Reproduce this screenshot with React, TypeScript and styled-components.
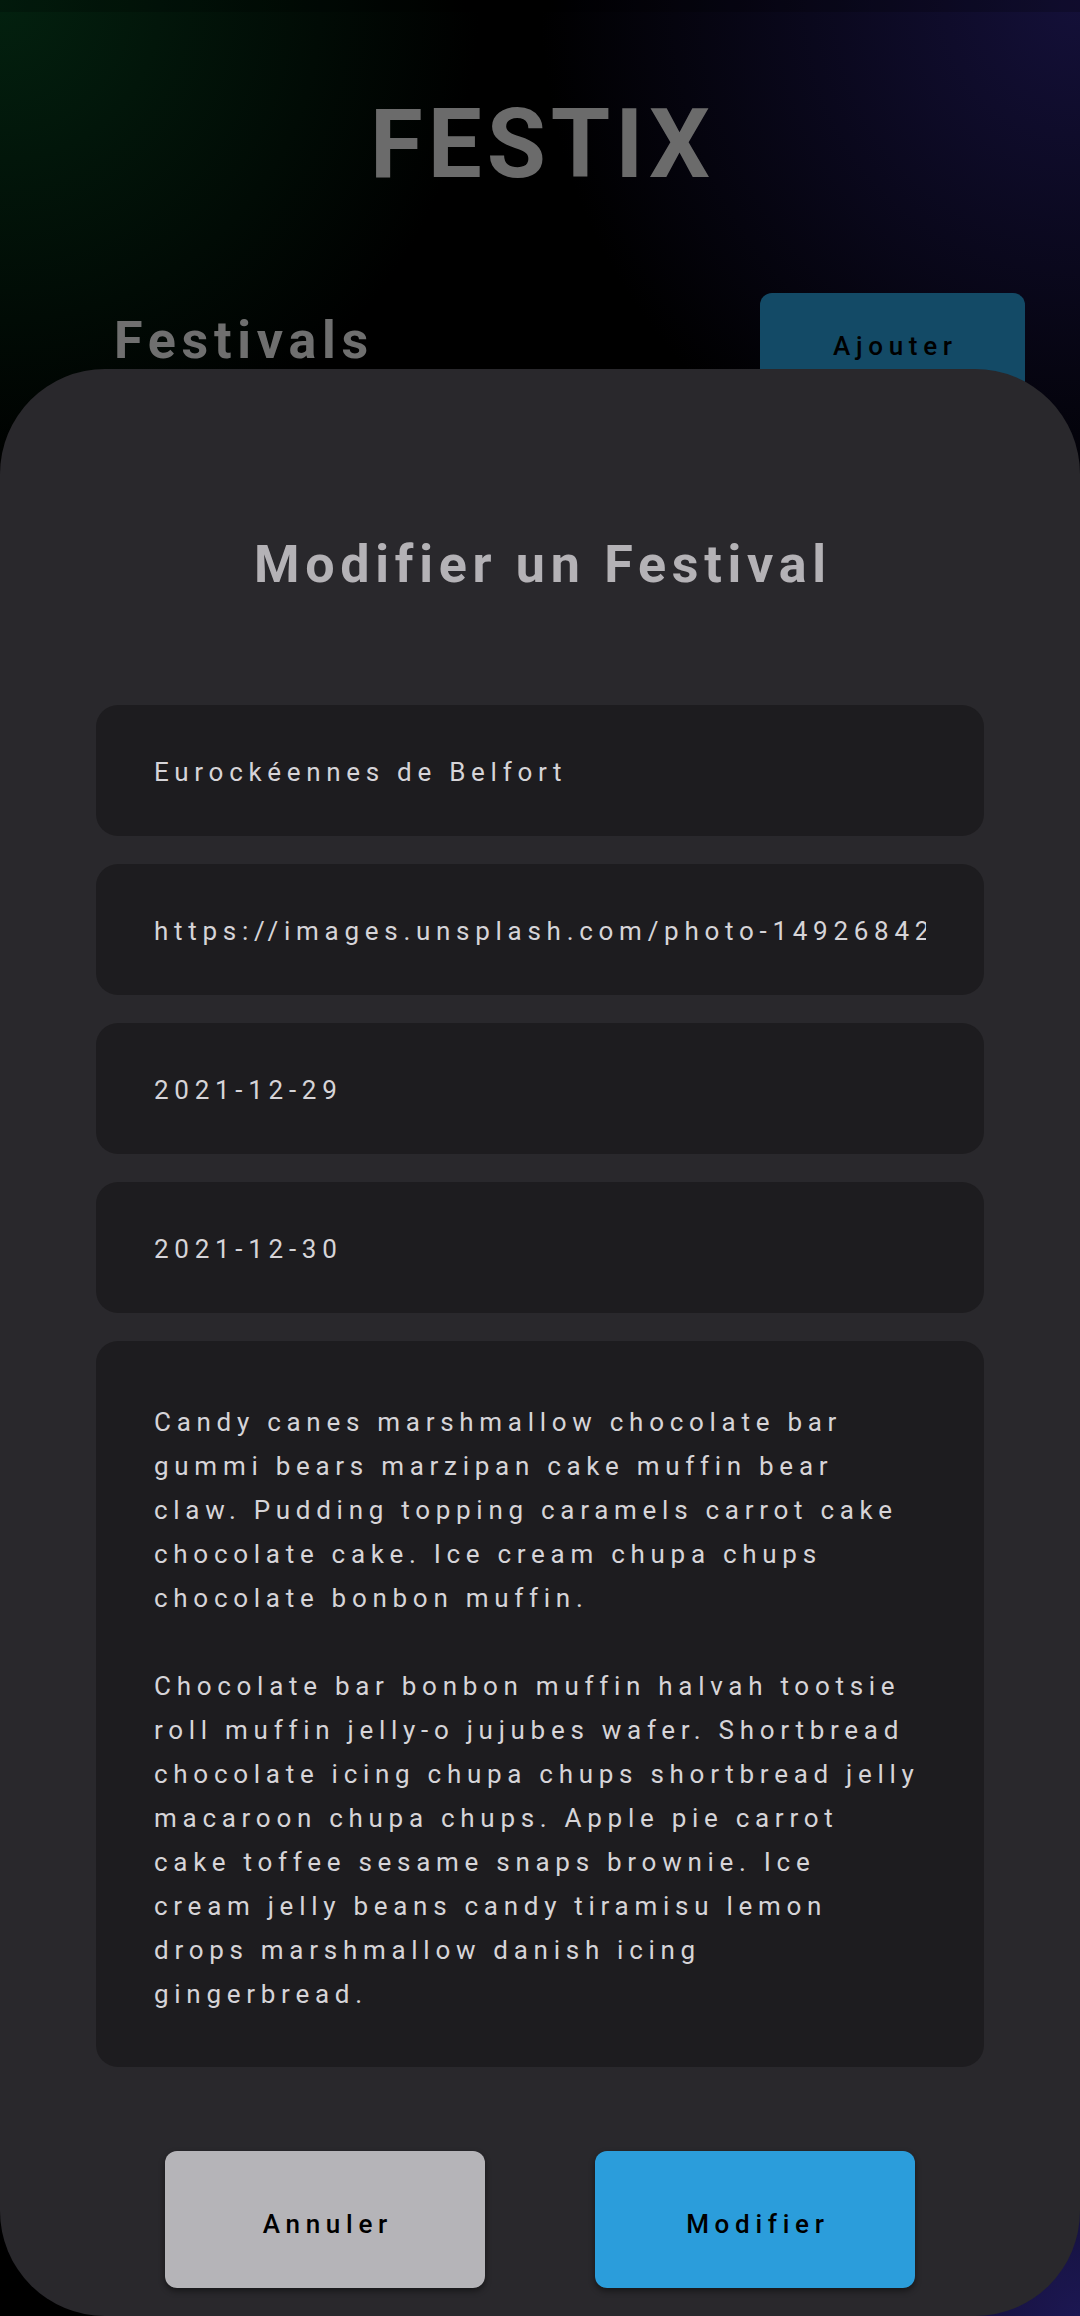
import React, { FC } from "react";
import styled, { createGlobalStyle } from "styled-components";

const GlobalStyle = createGlobalStyle`
  * {
    box-sizing: border-box;
  }
  html, body {
    margin: 0;
    padding: 0;
    background: #000;
    font-family: Roboto, "Noto Sans", "Liberation Sans", sans-serif;
  }
`;

const Page = styled.div`
  position: relative;
  width: 1080px;
  height: 2316px;
  overflow: hidden;
  background:
    radial-gradient(circle at 0 0, #03210f 0, rgba(0, 0, 0, 0) 480px),
    radial-gradient(circle at 100% 0, #141039 0, rgba(0, 0, 0, 0) 540px),
    radial-gradient(circle at 100% 100%, #1c1752 0, rgba(0, 0, 0, 0) 480px),
    #000;
`;

const StatusBar = styled.div`
  height: 12px;
  background: rgba(0, 0, 0, 0.2);
`;

const Brand = styled.h1`
  margin: 76px 0 0;
  text-align: center;
  font-size: 96px;
  line-height: 1.172;
  font-weight: 700;
  letter-spacing: 5px;
  padding-left: 5px;
  color: #6b6b6b;
`;

const ListHeader = styled.div`
  display: flex;
  align-items: center;
  justify-content: space-between;
  margin-top: 84px;
  padding: 0 55px 0 114px;
`;

const SectionTitle = styled.h2`
  margin: 0;
  font-size: 52px;
  line-height: 1.172;
  font-weight: 700;
  letter-spacing: 0.11em;
  color: #6f6f6f;
`;

const AddButton = styled.button`
  width: 265px;
  height: 106px;
  border: none;
  border-radius: 12px;
  background: #134a66;
  color: #000;
  font-family: inherit;
  font-size: 26px;
  font-weight: 500;
  letter-spacing: 0.22em;
  padding: 0 0 0 0.22em;
  margin-top: 8px;
`;

const Sheet = styled.div`
  position: absolute;
  left: 0;
  right: 0;
  top: 369px;
  height: 1947px;
  border-radius: 105px;
  background: #29282c;
  display: flex;
  flex-direction: column;
  align-items: center;
  padding: 166px 96px 28px;
`;

const SheetTitle = styled.h2`
  margin: 0 0 109px;
  font-size: 52px;
  line-height: 1.172;
  font-weight: 700;
  letter-spacing: 0.11em;
  padding-left: 0.11em;
  color: #b4b2b6;
`;

const Form = styled.form`
  width: 100%;
  display: flex;
  flex-direction: column;
  gap: 28px;
`;

const Field = styled.input`
  width: 100%;
  height: 131px;
  border: none;
  outline: none;
  border-radius: 22px;
  background: #1d1c1f;
  padding: 4px 58px 0;
  color: #d6d4d8;
  font-family: inherit;
  font-size: 26px;
  letter-spacing: 0.22em;
`;

const Description = styled.textarea`
  width: 100%;
  height: 726px;
  border: none;
  outline: none;
  resize: none;
  overflow: hidden;
  border-radius: 22px;
  background: #1d1c1f;
  padding: 59px 62px 49px 58px;
  color: #d6d4d8;
  font-family: inherit;
  font-size: 26px;
  line-height: 44px;
  letter-spacing: 0.22em;
`;

const Actions = styled.div`
  display: flex;
  justify-content: center;
  gap: 110px;
  margin-top: 84px;
`;

const ActionButton = styled.button<{ $primary?: boolean }>`
  width: 320px;
  height: 137px;
  border: none;
  border-radius: 12px;
  background: ${(p) => (p.$primary ? "#2b9ddb" : "#b5b4b8")};
  box-shadow: 0 3px 6px rgba(0, 0, 0, 0.45);
  color: #000;
  font-family: inherit;
  font-size: 26px;
  font-weight: 500;
  letter-spacing: 0.22em;
  padding: 10px 0 0 0.22em;
`;

const description =
  "Candy canes marshmallow chocolate bar gummi bears marzipan cake muffin bear claw. Pudding topping caramels carrot cake chocolate cake. Ice cream chupa chups chocolate bonbon muffin.\n\nChocolate bar bonbon muffin halvah tootsie roll muffin jelly-o jujubes wafer. Shortbread chocolate icing chupa chups shortbread jelly macaroon chupa chups. Apple pie carrot cake toffee sesame snaps brownie. Ice cream jelly beans candy tiramisu lemon drops marshmallow danish icing gingerbread.";

const App: FC = () => {
  return (
    <>
      <GlobalStyle />
      <Page>
        <StatusBar />
        <Brand>FESTIX</Brand>
        <ListHeader>
          <SectionTitle>Festivals</SectionTitle>
          <AddButton>Ajouter</AddButton>
        </ListHeader>

        <Sheet>
          <SheetTitle>Modifier un Festival</SheetTitle>
          <Form onSubmit={(e) => e.preventDefault()}>
            <Field defaultValue="Eurockéennes de Belfort" />
            <Field defaultValue="https://images.unsplash.com/photo-1492684223066-81342ee5ff30" />
            <Field defaultValue="2021-12-29" />
            <Field defaultValue="2021-12-30" />
            <Description defaultValue={description} />
          </Form>
          <Actions>
            <ActionButton type="button">Annuler</ActionButton>
            <ActionButton type="button" $primary>
              Modifier
            </ActionButton>
          </Actions>
        </Sheet>
      </Page>
    </>
  );
};

export default App;
